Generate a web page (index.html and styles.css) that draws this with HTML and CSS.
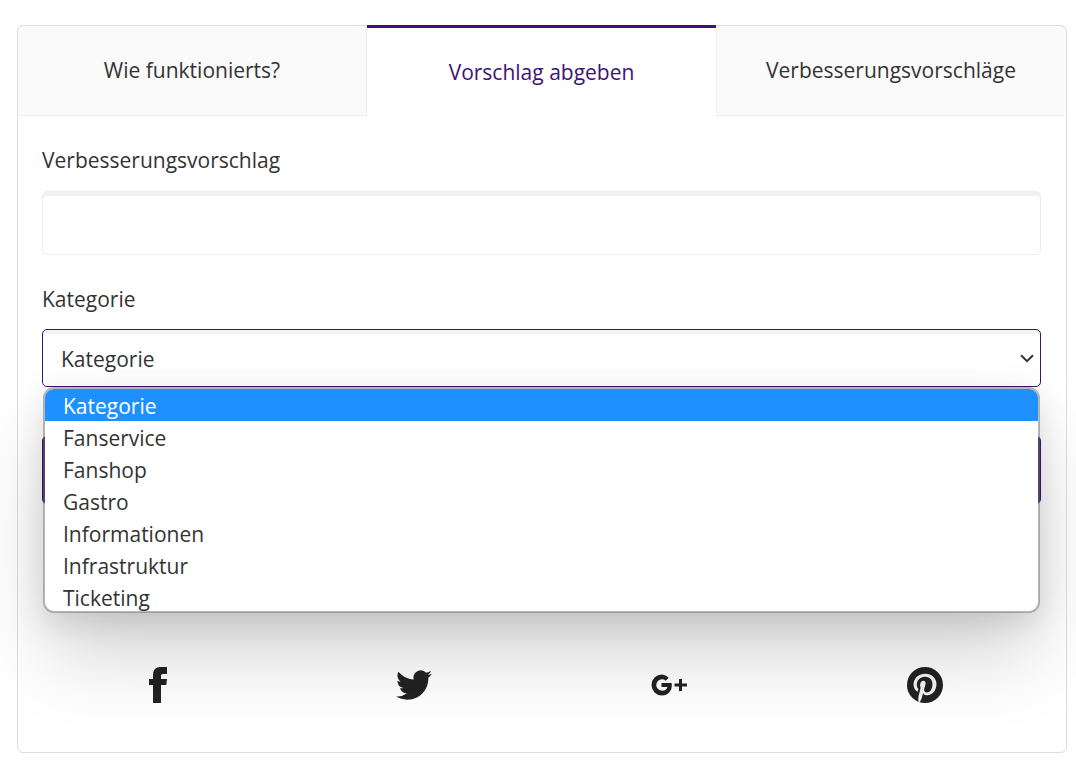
FILE: index.html
```html
<!DOCTYPE html>
<html lang="de">
<head>
    <meta charset="UTF-8">
    <meta name="viewport" content="width=device-width, initial-scale=1.0">
    <title>Vorschlag abgeben</title>

    <link rel="stylesheet" href="styles.css">
</head>
<body>
    <main class="card">
        <nav class="tabs">
            <a href="#hilfe" class="tab">Wie funktionierts?</a>
            <a href="#abgeben" class="tab active" aria-current="page">Vorschlag abgeben</a>
            <a href="#vorschlaege" class="tab">Verbesserungsvorschläge</a>
        </nav>

        <form class="form" id="abgeben">
            <label for="vorschlag">Verbesserungsvorschlag</label>
            <input type="text" id="vorschlag" class="field">

            <label for="kategorie">Kategorie</label>
            <div class="select-wrap">
                <select id="kategorie" class="select">
                    <option>Kategorie</option>
                    <option>Fanservice</option>
                    <option>Fanshop</option>
                    <option>Gastro</option>
                    <option>Informationen</option>
                    <option>Infrastruktur</option>
                    <option>Ticketing</option>
                </select>
                <svg class="chevron" viewBox="0 0 14 9" aria-hidden="true"><path d="M1 1.200l6 6 6-6" fill="none" stroke="#333" stroke-width="2"/></svg>

                <!-- Geöffnete Auswahlliste -->
                <ul class="options" role="listbox" aria-label="Kategorie">
                    <li role="option" aria-selected="true" class="selected">Kategorie</li>
                    <li role="option">Fanservice</li>
                    <li role="option">Fanshop</li>
                    <li role="option">Gastro</li>
                    <li role="option">Informationen</li>
                    <li role="option">Infrastruktur</li>
                    <li role="option">Ticketing</li>
                </ul>
            </div>

            <button type="submit" class="submit" aria-label="Absenden"></button>
        </form>

        <div class="share">
            <a href="#facebook" aria-label="Facebook">
                <svg viewBox="0 0 36 36"><path d="M13 36V18H9v-6h4V8.500C13 3 15.500 0 20.500 0H27v7h-4c-1.700 0-2 .7-2 2v3h6l-.7 6H21v18z"/></svg>
            </a>
            <a href="#twitter" aria-label="Twitter">
                <svg viewBox="0 0 24 24"><path d="M23.950 4.570a10 10 0 0 1-2.820.770 4.960 4.960 0 0 0 2.160-2.720c-.95.550-2 .960-3.130 1.180a4.920 4.920 0 0 0-8.380 4.480C7.690 8.090 4.070 6.130 1.640 3.160a4.820 4.820 0 0 0-.67 2.480c0 1.710.87 3.210 2.190 4.100a4.900 4.900 0 0 1-2.230-.62v.06a4.920 4.920 0 0 0 3.950 4.830 5 5 0 0 1-2.210.08 4.940 4.940 0 0 0 4.600 3.420A9.870 9.870 0 0 1 0 19.540a14 14 0 0 0 7.550 2.210c9.050 0 14-7.500 14-13.980l-.02-.63a9.900 9.900 0 0 0 2.420-2.570z"/></svg>
            </a>
            <a href="#googleplus" aria-label="Google Plus">
                <svg viewBox="0 0 36 36"><path d="M20.500 16h-10v4h6c-.6 2.300-2.600 3.700-5.500 3.700a5.700 5.700 0 1 1 3.700-10l3-3A10.500 10.500 0 0 0 11 7.500a10.500 10.500 0 0 0 0 21c6 0 9.800-4.200 9.800-10.200 0-.8-.1-1.600-.3-2.300zM28 12h3v4.500h5v3h-5V24h-3v-4.500h-4.500v-3H28z"/></svg>
            </a>
            <a href="#pinterest" aria-label="Pinterest">
                <svg viewBox="0 0 24 24"><path d="M12 0a12 12 0 1 0 0 24A12 12 0 0 0 12 0z"/><path class="cut" d="M7.650 23.180c-.1-.94-.2-2.400.04-3.440l1.400-5.960s-.36-.72-.36-1.780c0-1.660.97-2.910 2.170-2.910 1.020 0 1.520.77 1.520 1.690 0 1.030-.66 2.570-1 3.990-.28 1.190.6 2.170 1.780 2.170 2.130 0 3.770-2.250 3.770-5.490 0-2.870-2.060-4.880-5.010-4.880-3.410 0-5.410 2.560-5.410 5.200 0 1.030.4 2.140.89 2.740.1.120.11.220.08.340l-.33 1.360c-.05.220-.17.270-.4.160-1.500-.7-2.430-2.880-2.430-4.650 0-3.780 2.750-7.250 7.920-7.250 4.160 0 7.390 2.970 7.390 6.920 0 4.140-2.610 7.460-6.230 7.460-1.210 0-2.360-.63-2.750-1.370l-.75 2.850c-.27 1.040-1 2.350-1.490 3.150z"/></svg>
            </a>
        </div>
    </main>
</body>
</html>
```
FILE: styles.css
```css
* {
    box-sizing: border-box;
}

body {
    margin: 0;
    padding: 25px 9px 16px 17px;
    background-color: #fff;
    color: #333;
    font-family: "Segoe UI", "Open Sans", "Noto Sans", sans-serif;
    font-size: 21px;
    line-height: 32px;
}

.card {
    border: 1px solid #ddd;
    border-radius: 6px;
    padding-bottom: 49px;
}

.tabs {
    display: grid;
    grid-template-columns: repeat(3, 1fr);
    margin-top: -1px;
    padding-right: 1px;
}

.tab {
    height: 91px;
    padding-top: 28px;
    border-top: 1px solid #ddd;
    border-bottom: 1px solid #eee;
    background-color: #fafafa;
    color: #333;
    text-align: center;
    text-decoration: none;
}

.tab:first-child {
    border-right: 1px solid #eee;
    border-top-left-radius: 6px;
}

.tab:last-child {
    border-left: 1px solid #eee;
    border-top-right-radius: 6px;
}

.tab.active {
    border-top: 3px solid #3d1472;
    border-bottom: none;
    background-color: #fff;
    color: #3d1472;
}

.form {
    display: flex;
    flex-direction: column;
    padding: 28px 25px 0 24px;
}

.field,
.select {
    width: 100%;
    padding: 2px 18px 0;
    border: 1px solid #eee;
    border-radius: 5px;
    background-color: #fff;
    box-shadow: inset 0 4px 0 #f1f1f1;
    color: #333;
    font: inherit;
    outline: none;
}

.field {
    height: 64px;
    margin: 15px 0 28px;
}

.select-wrap {
    position: relative;
    margin: 14px 0 49px;
}

.select {
    display: block;
    height: 58px;
    border-color: #3d1472;
    box-shadow: inset 0 4px 1px #f3f3f3;
    appearance: none;
}

.chevron {
    position: absolute;
    top: 25px;
    right: 7px;
    width: 14px;
    height: 9px;
}

.options {
    position: absolute;
    z-index: 1;
    top: 100%;
    left: 0;
    right: 0;
    max-height: 226px;
    margin: 0 1px;
    padding: 0;
    border: 2px solid rgba(112, 112, 112, 0.5);
    border-radius: 11px;
    background-color: #fff;
    background-clip: padding-box;
    box-shadow: 0 44px 80px -4px rgba(0, 0, 0, 0.18), 0 10px 30px rgba(0, 0, 0, 0.1);
    line-height: 34px;
    list-style: none;
    overflow: hidden;
}

.options li {
    height: 32px;
    padding-left: 18px;
}

.options .selected {
    background-color: #1e90ff;
    color: #fff;
}

.submit {
    height: 68px;
    border: none;
    border-radius: 5px;
    background-color: #3d1472;
    cursor: pointer;
}

.share {
    display: grid;
    grid-template-columns: repeat(4, 1fr);
    justify-items: center;
    padding: 163px 13px 0 12px;
}

.share a,
.share svg {
    display: block;
    width: 36px;
    height: 36px;
}

.share svg {
    fill: #222;
}

.share .cut {
    fill: #f5f5f5;
}
```
